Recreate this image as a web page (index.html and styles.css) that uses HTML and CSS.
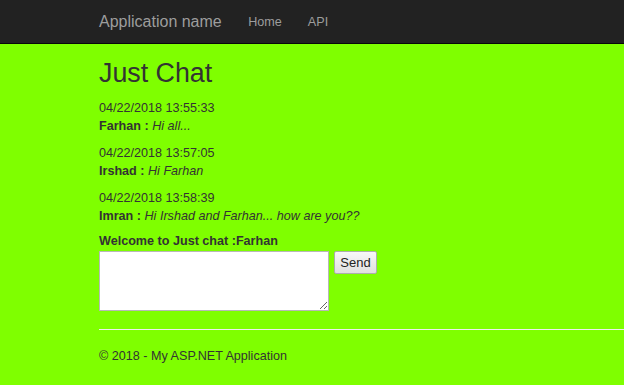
FILE: index.html
```html
<!DOCTYPE html>
<html lang="en">
<head>
    <meta charset="UTF-8">
    <meta name="viewport" content="width=device-width, initial-scale=1.0">
    <title>Just Chat - My ASP.NET Application</title>
    <link rel="stylesheet" href="styles.css">
</head>
<body>
    <div class="navbar">
        <a href="#" class="brand">Application name</a>
        <a href="#" class="nav-link">Home</a>
        <a href="#" class="nav-link">API</a>
    </div>

    <div class="container">
        <h2>Just Chat</h2>

        <ul class="messages">
            <li>
                <div class="stamp">04/22/2018 13:55:33</div>
                <div><strong>Farhan :</strong> <em>Hi all...</em></div>
            </li>
            <li>
                <div class="stamp">04/22/2018 13:57:05</div>
                <div><strong>Irshad :</strong> <em>Hi Farhan</em></div>
            </li>
            <li>
                <div class="stamp">04/22/2018 13:58:39</div>
                <div><strong>Imran :</strong> <em>Hi Irshad and Farhan... how are you??</em></div>
            </li>
        </ul>

        <label class="welcome" for="message">Welcome to Just chat :Farhan</label>
        <div class="compose">
            <textarea id="message"></textarea>
            <button type="button" id="sendBtn">Send</button>
        </div>

        <hr>
        <footer>
            <p>&copy; 2018 - My ASP.NET Application</p>
        </footer>
    </div>
</body>
</html>
```

FILE: styles.css
```css
body {
    margin: 0;
    font-family: "Liberation Sans", Arial, sans-serif;
    font-size: 12.6px;
    line-height: 18px;
    color: #333;
    background-color: #7fff00;
}
.navbar {
    display: flex;
    align-items: center;
    height: 43px;
    padding-left: 99px;
    background-color: #222;
    border-bottom: 1px solid #080808;
}
.navbar a {
    color: #9d9d9d;
    text-decoration: none;
    line-height: normal;
}
.navbar .brand {
    font-size: 16px;
    padding-right: 13.5px;
}
.navbar .nav-link {
    padding: 0 13px;
}
.container {
    padding-left: 99px;
}
h2 {
    font-size: 26.8px;
    font-weight: 500;
    line-height: 29px;
    margin: 14.7px 0 11px;
}
.messages {
    list-style: none;
    margin: 0 0 7.5px;
    padding: 0;
}
.messages li {
    margin-bottom: 9px;
}
.messages li:last-child {
    margin-bottom: 0;
}
.welcome {
    display: block;
    font-weight: bold;
}
.compose {
    display: flex;
    align-items: flex-start;
    gap: 5px;
    margin-top: 0.5px;
}
textarea {
    box-sizing: border-box;
    width: 230px;
    height: 60px;
    margin: 0;
    border: 1px solid #b8b8b8;
    background-color: #fff;
}
button {
    box-sizing: border-box;
    width: 43px;
    height: 23px;
    padding: 0;
    font-family: "Liberation Sans", Arial, sans-serif;
    font-size: 13px;
    color: #222;
    background: linear-gradient(#f8f8f8, #e0e0e0);
    border: 1px solid #adadad;
    border-radius: 2px;
    cursor: pointer;
}
hr {
    margin: 18px 0 0;
    border: 0;
    border-top: 1px solid #eee;
}
footer p {
    margin: 17px 0 0;
}
```
